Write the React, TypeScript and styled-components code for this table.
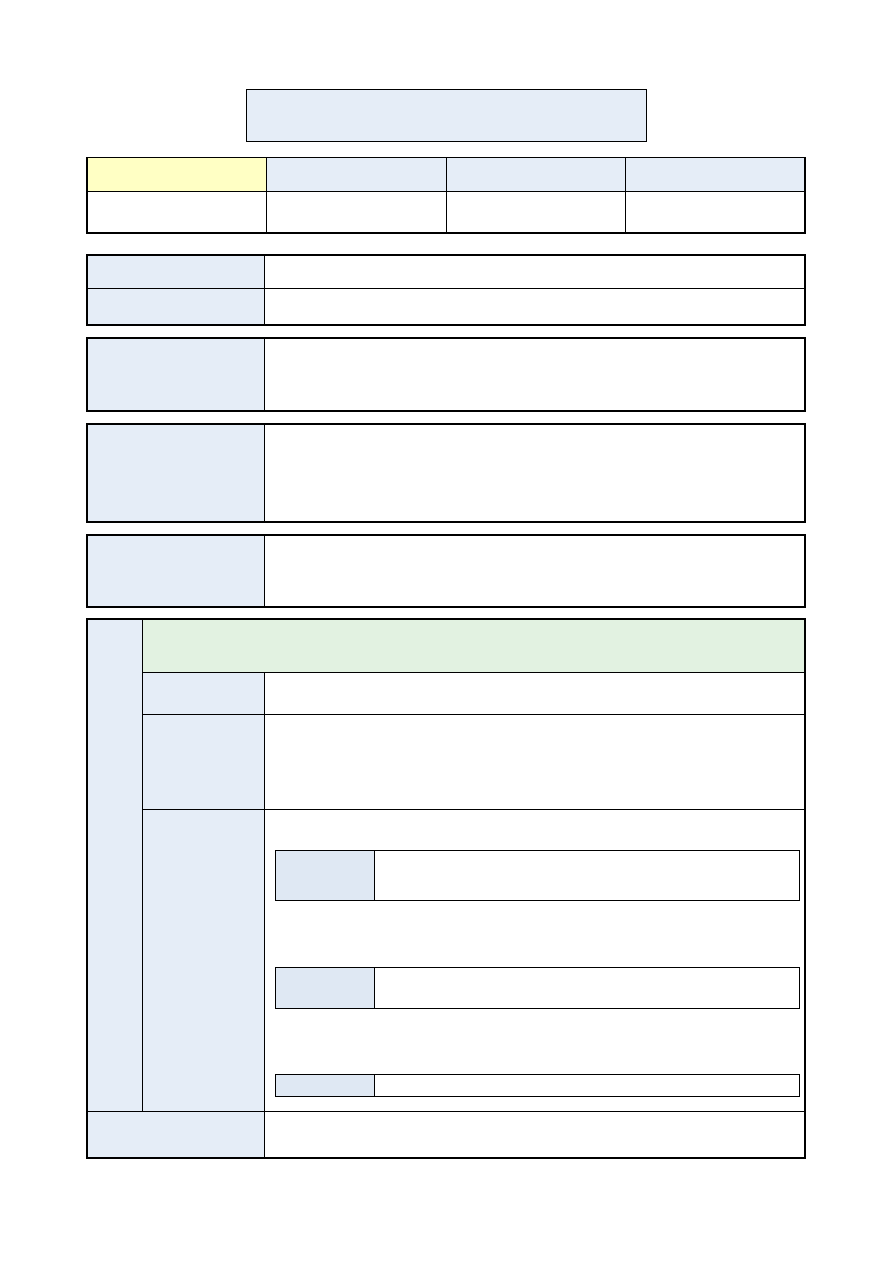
import React from "react";
import styled, { createGlobalStyle } from "styled-components";

const LABEL_BG = `#e5edf7`;
const SUB_LABEL_BG = `#dfe8f3`;
const YELLOW_BG = `#ffffc4`;
const GREEN_BG = `#e2f2e1`;
const LINE = `#000`;

const GlobalStyle = createGlobalStyle`
  html, body {
    margin: 0;
    padding: 0;
    background: #fff;
    font-family: "Liberation Sans", Arial, sans-serif;
  }
  * {
    box-sizing: border-box;
  }
`;

const Page = styled.div`
  width: 893px;
  min-height: 1262px;
  padding-top: 89px;
  background: #fff;
`;

const TitleBox = styled.div`
  width: 401px;
  height: 53px;
  margin: 0 auto 15px;
  border: 1px solid ${LINE};
  background: ${LABEL_BG};
`;

const Sheet = styled.div`
  width: 720px;
  margin-left: 86px;
  display: flex;
  flex-direction: column;
`;

const Table = styled.div<{ $thinTop?: boolean; $gap?: number }>`
  display: flex;
  flex-direction: column;
  border: 2px solid ${LINE};
  border-top-width: ${(p) => (p.$thinTop ? 1 : 2)}px;
  margin-top: ${(p) => p.$gap ?? 0}px;
`;

const Row = styled.div<{ $h?: number }>`
  display: flex;
  flex-direction: row;
  height: ${(p) => (p.$h ? `${p.$h}px` : "auto")};

  & + & {
    border-top: 1px solid ${LINE};
  }
`;

const Cell = styled.div<{ $bg?: string }>`
  flex: 1;
  background: ${(p) => p.$bg ?? "#fff"};

  & + & {
    border-left: 1px solid ${LINE};
  }
`;

const Label = styled.div<{ $w?: number }>`
  width: ${(p) => p.$w ?? 177}px;
  flex-shrink: 0;
  background: ${LABEL_BG};
  border-right: 1px solid ${LINE};
`;

const Value = styled.div`
  flex: 1;
  background: #fff;
`;

const Split = styled.div<{ $grow?: boolean }>`
  display: flex;
  flex-direction: row;
  flex: ${(p) => (p.$grow ? 1 : "none")};
`;

const SideStrip = styled.div`
  width: 55px;
  flex-shrink: 0;
  background: ${LABEL_BG};
  border-right: 1px solid ${LINE};
`;

const Inner = styled.div`
  flex: 1;
  display: flex;
  flex-direction: column;
`;

const GreenHead = styled.div`
  height: 53px;
  background: ${GREEN_BG};
  border-bottom: 1px solid ${LINE};
`;

const InnerRow = styled.div<{ $h: number }>`
  display: flex;
  height: ${(p) => p.$h}px;
  border-bottom: 1px solid ${LINE};
`;

const NestedArea = styled.div`
  flex: 1;
  display: flex;
  flex-direction: column;
  padding: 40px 4px 0 10px;
  background: #fff;
`;

const SubTable = styled.div<{ $h: number; $gap: number }>`
  display: flex;
  height: ${(p) => p.$h}px;
  margin-bottom: ${(p) => p.$gap}px;
  border: 1px solid ${LINE};
`;

const SubLabel = styled.div`
  width: 99px;
  flex-shrink: 0;
  background: ${SUB_LABEL_BG};
  border-right: 1px solid ${LINE};
`;

const SubValue = styled.div`
  flex: 1;
  background: #fff;
`;

const Footer = styled.div`
  display: flex;
  height: 46px;
  border-top: 1px solid ${LINE};
`;

export default function App(): JSX.Element {
  return (
    <>
      <GlobalStyle />
      <Page>
        <TitleBox />
        <Sheet>
          <Table $thinTop>
            <Row $h={33}>
              <Cell $bg={YELLOW_BG} />
              <Cell $bg={LABEL_BG} />
              <Cell $bg={LABEL_BG} />
              <Cell $bg={LABEL_BG} />
            </Row>
            <Row $h={41}>
              <Cell />
              <Cell />
              <Cell />
              <Cell />
            </Row>
          </Table>

          <Table $gap={20}>
            <Row $h={32}>
              <Label />
              <Value />
            </Row>
            <Row $h={36}>
              <Label />
              <Value />
            </Row>
          </Table>

          <Table $gap={11}>
            <Row $h={71}>
              <Label />
              <Value />
            </Row>
          </Table>

          <Table $gap={11}>
            <Row $h={96}>
              <Label />
              <Value />
            </Row>
          </Table>

          <Table $gap={11}>
            <Row $h={70}>
              <Label />
              <Value />
            </Row>
          </Table>

          <Table $gap={10}>
            <Split>
              <SideStrip />
              <Inner>
                <GreenHead />
                <InnerRow $h={42}>
                  <Label $w={122} />
                  <Value />
                </InnerRow>
                <InnerRow $h={95}>
                  <Label $w={122} />
                  <Value />
                </InnerRow>
                <Split $grow>
                  <Label $w={122} />
                  <NestedArea>
                    <SubTable $h={51} $gap={66}>
                      <SubLabel />
                      <SubValue />
                    </SubTable>
                    <SubTable $h={42} $gap={65}>
                      <SubLabel />
                      <SubValue />
                    </SubTable>
                    <SubTable $h={23} $gap={14}>
                      <SubLabel />
                      <SubValue />
                    </SubTable>
                  </NestedArea>
                </Split>
              </Inner>
            </Split>
            <Footer>
              <Label />
              <Value />
            </Footer>
          </Table>
        </Sheet>
      </Page>
    </>
  );
}
